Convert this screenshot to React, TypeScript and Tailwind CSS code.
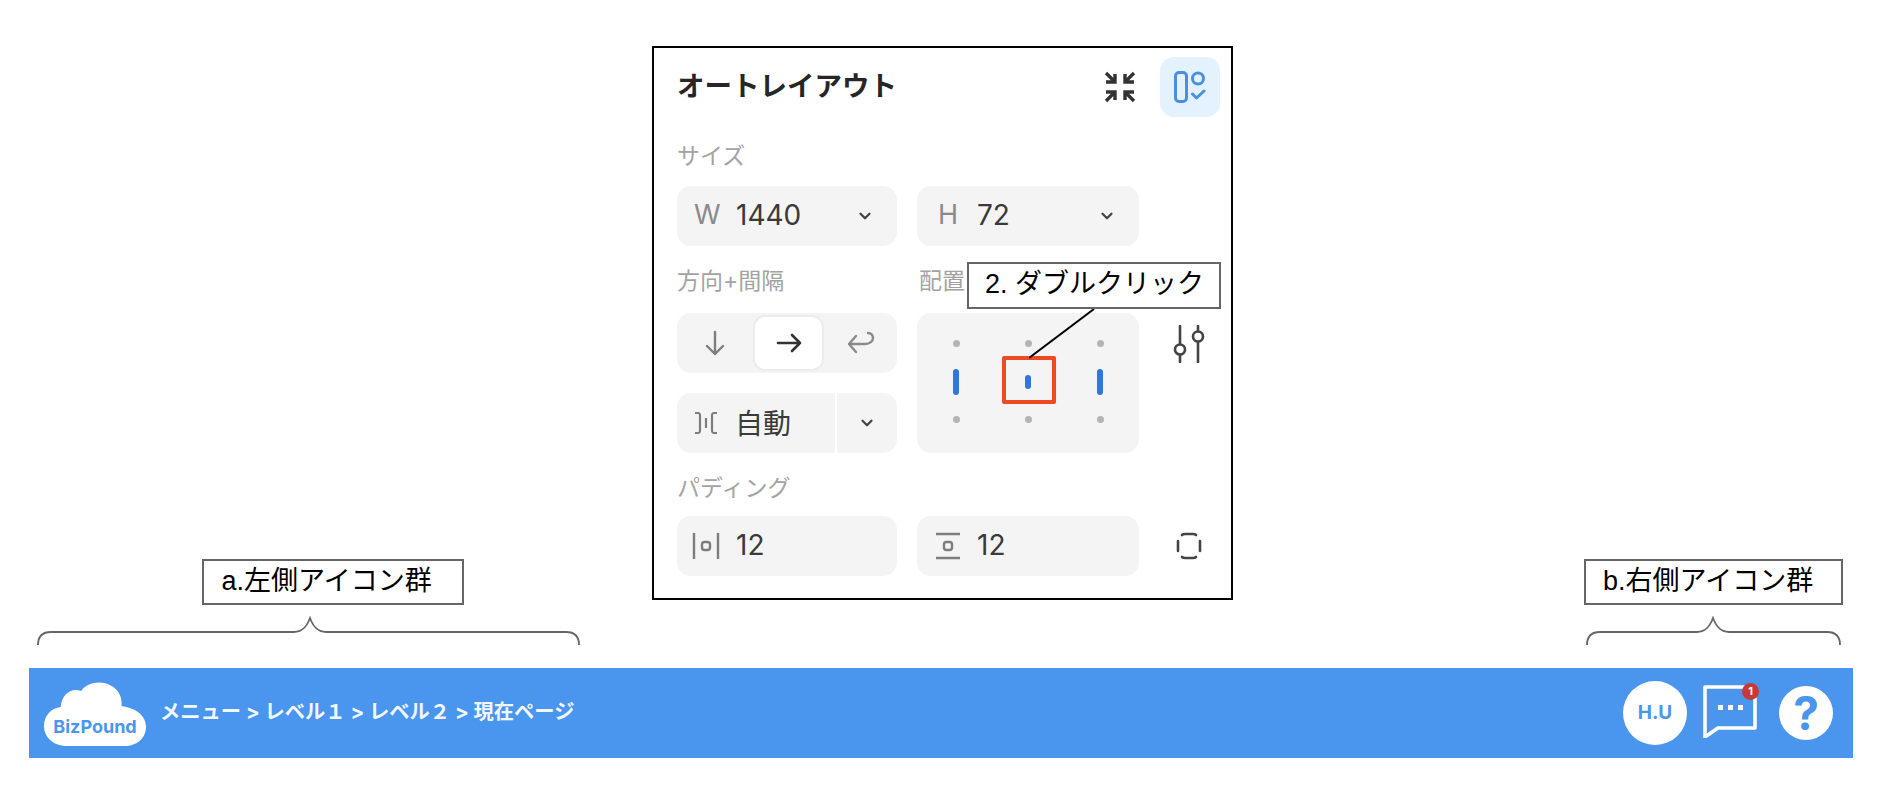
import { ChevronDown } from "lucide-react";

const Chevron = () => <ChevronDown size={18} strokeWidth={3} className="text-[#444]" />;

const SizeField = ({ label, value, inset, labelW }: { label: string; value: string; inset: string; labelW: string }) => (
  <div className={`h-[60px] rounded-[14px] bg-[#f4f4f4] flex items-center pr-[23px] ${inset}`}>
    <span className={`text-[27px] text-[#8a8a8a] pb-[2px] ${labelW}`}>{label}</span>
    <span className="flex-1 text-[28px] text-[#3a3a3a] pb-[2px]">{value}</span>
    <Chevron />
  </div>
);

const Label = ({ children, className = "" }: { children: React.ReactNode; className?: string }) => (
  <div className={`h-[30px] leading-[30px] text-[23px] text-[#a3a3a3] ${className}`}>{children}</div>
);

const Brace = ({ width, tip }: { width: number; tip: number }) => (
  <svg width={width} height={30} viewBox={`0 0 ${width} 30`} fill="none" stroke="#666" strokeWidth="1.8">
    <path d={`M1 29 C1 20 6 16 14 16 H${tip - 16} C${tip - 7} 16 ${tip - 3} 10 ${tip} 2 C${tip + 3} 10 ${tip + 7} 16 ${tip + 16} 16 H${width - 14} C${width - 6} 16 ${width - 1} 20 ${width - 1} 29`} />
  </svg>
);

const Dot = () => <div className="w-[7px] h-[7px] rounded-full bg-[#b4b4b4]" />;
const Bar = ({ small }: { small?: boolean }) => (
  <div className={small ? "w-[6px] h-[14px] rounded-full bg-[#2f76e0]" : "w-[6px] h-[26px] rounded-full bg-[#2f76e0]"} />
);

export default function App() {
  return (
    <div className="w-[1884px] h-[790px] bg-white overflow-hidden font-['Inter','Noto_Sans_CJK_JP',sans-serif]">
      <div className="h-[668px] flex">
        {/* left group label */}
        <div className="ml-[37px] w-[543px] self-end mb-[22px] flex flex-col items-center">
          <div className="w-[262px] h-[46px] ml-[48px] mb-[11px] border-2 border-[#666] flex items-center pl-[18px] pb-[2px] text-[27px] text-black font-['Liberation_Sans','Noto_Sans_CJK_JP',sans-serif]">
            a.左側アイコン群
          </div>
          <Brace width={543} tip={273} />
        </div>

        {/* panel */}
        <div className="relative ml-[72px] mt-[46px] w-[581px] h-[554px] self-start border-2 border-black pl-[23px] pt-[9px]">
          <div className="flex items-center h-[60px] pr-[11px]">
            <span className="flex-1 text-[27.5px] font-bold text-[#262626]">オートレイアウト</span>
            <svg width="32" height="32" viewBox="0 0 32 32" className="mr-[24px]" fill="none" stroke="#333" strokeWidth="3.4">
              <path d="M2 2 L10 10 M2 11 H11 V3" />
              <path d="M30 2 L22 10 M30 11 H21 V3" />
              <path d="M2 30 L10 22 M2 21 H11 V29" />
              <path d="M30 30 L22 22 M30 21 H21 V29" />
            </svg>
            <div className="w-[60px] h-[60px] rounded-[14px] bg-[#e4f1fe] flex items-center justify-center">
              <svg width="32" height="32" viewBox="0 0 32 32" fill="none" stroke="#4a90e2" strokeWidth="3">
                <rect x="1.5" y="1.5" width="11" height="29" rx="3.5" />
                <circle cx="24" cy="7.5" r="5.5" />
                <path d="M18.5 23 L22.5 27 L30 20" strokeLinecap="round" strokeLinejoin="round" />
              </svg>
            </div>
          </div>

          <Label className="mt-[24px] mb-[15px]">サイズ</Label>
          <div className="grid grid-cols-[220px_222px] gap-x-5">
            <SizeField label="W" value="1440" inset="pl-[17px]" labelW="w-[42px]" />
            <SizeField label="H" value="72" inset="pl-[21px]" labelW="w-[39px]" />
          </div>

          <div className="grid grid-cols-[220px_222px] gap-x-5 mt-[20px] mb-[17px]">
            <Label>方向+間隔</Label>
            <Label className="pl-[2px]">配置</Label>
          </div>
          <div className="grid grid-cols-[220px_222px_60px] gap-x-5">
            <div className="flex flex-col gap-5">
              <div className="h-[60px] rounded-[14px] bg-[#f4f4f4] flex items-center">
                <div className="w-[76px] flex justify-center">
                  <svg width="20" height="26" viewBox="0 0 20 26" fill="none" stroke="#7d7d7d" strokeWidth="2.4" strokeLinecap="round" strokeLinejoin="round">
                    <path d="M10 2 V24 M2 16 L10 24 L18 16" />
                  </svg>
                </div>
                <div className="w-[71px] h-[56px] rounded-[12px] bg-white border-2 border-[#ececec] flex items-center justify-center">
                  <svg width="26" height="20" viewBox="0 0 26 20" fill="none" stroke="#333" strokeWidth="2.6" strokeLinecap="round" strokeLinejoin="round">
                    <path d="M2 10 H24 M16 2 L24 10 L16 18" />
                  </svg>
                </div>
                <div className="flex-1 flex justify-center">
                  <svg width="28" height="24" viewBox="0 0 28 24" fill="none" stroke="#8a8a8a" strokeWidth="2.4" strokeLinecap="round" strokeLinejoin="round">
                    <path d="M2 13 H18 C23 13 26 10 26 7 C26 4 24 2 21 2 M9 5 L2 13 L9 21" />
                  </svg>
                </div>
              </div>
              <div className="h-[60px] rounded-[14px] bg-[#f4f4f4] flex items-center">
                <div className="w-[158px] flex items-center pl-[17px]">
                  <svg width="24" height="24" viewBox="0 0 24 24" fill="none" stroke="#7d7d7d" strokeWidth="2.2" className="mr-[17px]">
                    <path d="M1 2 H4 C6 2 6 3 6 5 V19 C6 21 6 22 4 22 H1" />
                    <path d="M12 7 V17" />
                    <path d="M23 2 H20 C18 2 18 3 18 5 V19 C18 21 18 22 20 22 H23" />
                  </svg>
                  <span className="text-[28px] text-[#3a3a3a] leading-none pt-[2px]">自動</span>
                </div>
                <div className="w-[2px] h-full bg-white" />
                <div className="flex-1 flex justify-center">
                  <Chevron />
                </div>
              </div>
            </div>

            <div className="relative h-[140px] rounded-[14px] bg-[#f4f4f4] flex justify-center pt-[27px]">
              <div className="grid grid-cols-[72px_72px_72px] grid-rows-[7px_69px_7px] justify-items-center items-center">
                <Dot /><Dot /><Dot />
                <Bar /><Bar small /><Bar />
                <Dot /><Dot /><Dot />
              </div>
              <div className="absolute left-[85px] top-[43px] w-[54px] h-[48px] border-[4px] border-[#f04a23] rounded-[2px]" />
            </div>

            <div className="flex justify-center pt-[12px]">
              <svg width="32" height="38" viewBox="0 0 32 38" fill="none" stroke="#444" strokeWidth="2.6" strokeLinecap="round">
                <path d="M7 1 V19 M7 30 V37" />
                <circle cx="7" cy="24.5" r="5" />
                <path d="M25 1 V6 M25 17 V37" />
                <circle cx="25" cy="11.5" r="5" />
              </svg>
            </div>
          </div>

          <Label className="mt-[20px] mb-[13px]">パディング</Label>
          <div className="grid grid-cols-[220px_222px_60px] gap-x-5">
            <div className="h-[60px] rounded-[14px] bg-[#f4f4f4] flex items-center pl-[15px]">
              <svg width="28" height="28" viewBox="0 0 28 28" fill="none" stroke="#7d7d7d" strokeWidth="2.4" className="mr-[16px]">
                <path d="M2 1 V27 M26 1 V27" />
                <rect x="10" y="10" width="8" height="8" rx="2.5" />
              </svg>
              <span className="text-[28px] text-[#3a3a3a] pb-[2px]">12</span>
            </div>
            <div className="h-[60px] rounded-[14px] bg-[#f4f4f4] flex items-center pl-[18px]">
              <svg width="26" height="28" viewBox="0 0 26 28" fill="none" stroke="#7d7d7d" strokeWidth="2.4" className="mr-[16px]">
                <path d="M1 2 H25 M1 26 H25" />
                <rect x="9" y="10" width="8" height="8" rx="2.5" />
              </svg>
              <span className="text-[28px] text-[#3a3a3a] pb-[2px]">12</span>
            </div>
            <div className="flex items-center justify-center">
              <svg width="26" height="28" viewBox="0 0 26 28" fill="none" stroke="#444" strokeWidth="2.6" strokeLinecap="round">
                <path d="M6 3 C7 2 8 2 9 2 H17 C18 2 19 2 20 3 M6 25 C7 26 8 26 9 26 H17 C18 26 19 26 20 25 M2 9 V19 M24 9 V19" />
              </svg>
            </div>
          </div>

          {/* callout over the panel */}
          <div className="absolute left-[313px] top-[214px] w-[254px] h-[47px] bg-white border-2 border-[#666] flex items-center pl-[16px] pb-[2px] text-[27px] text-black font-['Liberation_Sans','Noto_Sans_CJK_JP',sans-serif]">
            2. ダブルクリック
          </div>
          <svg className="absolute left-[375px] top-[261px]" width="66" height="50" viewBox="0 0 66 50" fill="none" stroke="#000" strokeWidth="2">
            <path d="M65 0 L0 49" />
          </svg>
        </div>

        {/* right group label */}
        <div className="ml-[353px] w-[255px] self-end mb-[22px] flex flex-col items-center">
          <div className="w-[259px] h-[46px] shrink-0 mb-[11px] border-2 border-[#666] flex items-center pl-[17px] pb-[2px] text-[27px] text-black font-['Liberation_Sans','Noto_Sans_CJK_JP',sans-serif]">
            b.右側アイコン群
          </div>
          <Brace width={255} tip={127} />
        </div>
      </div>

      {/* header bar */}
      <div className="ml-[29px] w-[1824px] h-[90px] bg-[#4a96ee] flex items-center justify-between pl-[15px] pr-[20px]">
        <div className="flex items-center">
          <div className="relative w-[102px] h-[64px] mt-[2px]">
            <svg width="102" height="64" viewBox="0 0 104 64" preserveAspectRatio="none" fill="#fff">
              <path d="M24 64 C8 64 0 54 0 44 C0 33 8 26 17 25 C18 12 28 5 38 9 C43 1 57 -2 67 3 C76 7 80 15 79 24 C93 26 104 33 104 45 C104 56 95 64 82 64 Z" />
            </svg>
            <span className="absolute left-0 right-0 bottom-[7px] text-center text-[18px] leading-[24px] font-bold text-[#4a96ee]">BizPound</span>
          </div>
          <span className="ml-[14px] -mt-[2px] text-[20.3px] font-bold text-[#f2f7fe] whitespace-pre">メニュー &gt; レベル１ &gt; レベル２ &gt; 現在ページ</span>
        </div>
        <div className="flex items-center">
          <div className="w-[64px] h-[64px] rounded-full bg-white flex items-center justify-center text-[19px] font-bold text-[#4a96ee]">H.U</div>
          <div className="relative w-[56px] h-[54px] ml-[16px] -mt-[4px]">
            <svg width="54" height="54" viewBox="0 0 54 54" fill="none">
              <path d="M2 3 H52 V44 H15 L2 53 Z" stroke="#fff" strokeWidth="3.6" strokeLinejoin="round" />
              <rect x="15" y="21" width="5" height="5" fill="#fff" />
              <rect x="25" y="21" width="5" height="5" fill="#fff" />
              <rect x="35" y="21" width="5" height="5" fill="#fff" />
            </svg>
            <div className="absolute left-[39px] -top-[1px] w-[17px] h-[17px] rounded-full bg-[#c73a35] flex items-center justify-center text-[11px] leading-none font-bold text-white">1</div>
          </div>
          <div className="w-[54px] h-[54px] ml-[20px] rounded-full bg-white flex items-center justify-center text-[46px] leading-none font-bold text-[#4a96ee]">?</div>
        </div>
      </div>
    </div>
  );
}
